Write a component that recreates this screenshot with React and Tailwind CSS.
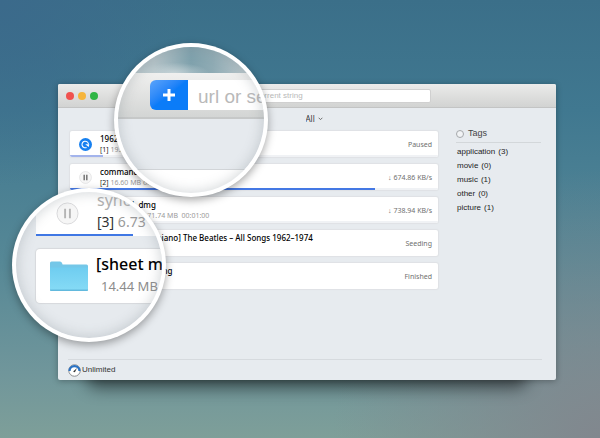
import { useState } from 'react';

const downloads = [
  { id: 1, title: '1962-1966', index: '[1]', detail: '19.20 MB', status: 'Paused', percent: 9, bar: 'bg-[#a3b4ec]', icon: 'resume' },
  { id: 2, title: 'command.dmg', index: '[2]', detail: '16.60 MB of', status: '↓ 674.86 KB/s', percent: 83, bar: 'bg-[#4478e4]', icon: 'pause' },
  { id: 3, title: 'sync tool. dmg', index: '[3]', detail: '6.73 MB of 71.74 MB  00:01:00', status: '↓ 738.94 KB/s', percent: 10, bar: 'bg-[#4478e4]', icon: 'pause' },
  { id: 4, title: '[sheet music – piano] The Beatles – All Songs 1962–1974', status: 'Seeding', icon: 'folder' },
  { id: 5, title: '[sheet music] Song', status: 'Finished', icon: 'folder' },
];

const tags = [
  { name: 'application', count: 3 },
  { name: 'movie', count: 0 },
  { name: 'music', count: 1 },
  { name: 'other', count: 0 },
  { name: 'picture', count: 1 },
];

function PauseIcon({ className }) {
  return (
    <svg viewBox="0 0 24 24" className={className} aria-hidden="true">
      <circle cx="12" cy="12" r="11" fill="#f6f6f6" stroke="#d8d8da" />
      <path d="M9.5 7v10M14.5 7v10" stroke="currentColor" strokeWidth="2" />
    </svg>
  );
}

function ResumeIcon({ className }) {
  return (
    <svg viewBox="0 0 24 24" className={className} aria-hidden="true">
      <circle cx="12" cy="12" r="12" fill="#1680f0" />
      <path d="M14 17.500a6 6 0 1 1 3.500-6" fill="none" stroke="#fff" strokeWidth="2" />
      <path d="M11.500 11.500h7.500l-1 5z" fill="#fff" />
    </svg>
  );
}

function FolderIcon({ className }) {
  return (
    <svg viewBox="0 0 38 31" className={className} aria-hidden="true">
      <defs>
        <linearGradient id="folder" x1="0" y1="0" x2="0" y2="1">
          <stop offset="0" stopColor="#6fcdf0" />
          <stop offset="1" stopColor="#86dbf6" />
        </linearGradient>
      </defs>
      <path d="M0 2.5Q0 1 1.500 1H10q1.500 0 2 1.500l.6 1.500H36.500Q38 4 38 5.500V29q0 1.500-1.500 1.500h-35Q0 30.500 0 29z" fill="#74c7e8" />
      <path d="M0 7h38v22q0 1.500-1.500 1.500h-35Q0 30.500 0 29z" fill="url(#folder)" />
      <path d="M0 29h38q0 1.500-1.500 1.500h-35Q0 30.500 0 29z" fill="#62b9dd" />
    </svg>
  );
}

function GaugeIcon({ className }) {
  return (
    <svg viewBox="0 0 26 26" className={className} aria-hidden="true">
      <circle cx="13" cy="13" r="11.500" fill="#fff" stroke="#8b8d90" strokeWidth="2" />
      <path d="M3 14A10 10 0 0 1 23 14" fill="none" stroke="#2a72c4" strokeWidth="4.500" />
      <path d="M11 14.500L18 8L14 16z" fill="#333" />
      <circle cx="12.500" cy="15" r="1.500" fill="#333" />
    </svg>
  );
}

function DownloadRow({ item }) {
  return (
    <li className="relative flex h-[26px] items-center overflow-hidden rounded-xs bg-white pl-2 pr-[6px] shadow-[0_0_1px_1px_#dfe2e5]">
      <button type="button" aria-label={item.icon} className="flex w-[22px] shrink-0 pl-px text-[#444]">
        {item.icon === 'resume' && <ResumeIcon className="size-[13px]" />}
        {item.icon === 'pause' && <PauseIcon className="size-[13px]" />}
        {item.icon === 'folder' && <FolderIcon className="h-3 w-4" />}
      </button>
      <div className="flex min-w-0 flex-1 flex-col self-start">
        <span className="truncate text-[8px] leading-[15px] font-medium text-black">{item.title}</span>
        {item.detail && (
          <span className="whitespace-pre text-[7px] leading-[8px] text-[#9a9a9a]">
            <span className="text-[#222]">{item.index} </span>
            {item.detail}
          </span>
        )}
      </div>
      <span className="shrink-0 pt-[2px] text-[7px] text-[#6f6f6f]">{item.status}</span>
      {item.percent && (
        <div className="absolute bottom-0 left-0 h-[2px] w-full bg-[#f0f2f5]">
          <div className={`h-full ${item.bar}`} style={{ width: `${item.percent}%` }}></div>
        </div>
      )}
    </li>
  );
}

function Lens({ className, children }) {
  return (
    <div className={`absolute size-[154px] rounded-full bg-white p-1 shadow-[0_3px_8px_rgba(0,0,0,0.35)] ${className}`}>
      <div className="relative size-full overflow-hidden rounded-full bg-[#e6eaee]">
        {children}
        <div className="pointer-events-none absolute inset-0 rounded-full shadow-[inset_0_0_12px_2px_rgba(130,140,145,0.3)]"></div>
      </div>
    </div>
  );
}

export default function App() {
  const [filter, setFilter] = useState('All');

  return (
    <div className="relative flex min-h-screen flex-col overflow-hidden bg-[radial-gradient(circle_at_100%_100%,#81878e_0%,transparent_36%),radial-gradient(circle_at_0%_0%,#3b6a8b_0%,transparent_25%),linear-gradient(to_bottom,#3b6f89_0%,#407890_25%,#568896_60%,#70969b_85%,#7e9f99_100%)] pt-[84px] pr-[44px] pb-[58px] pl-[58px] font-['Noto_Sans',sans-serif]">
      <div className="relative flex flex-1 flex-col">
        <div className="absolute inset-x-7 -bottom-2 h-6 rounded-full bg-black/50 blur-[8px]"></div>
        <div className="relative flex flex-1 flex-col rounded-xs bg-[#e7ebef] shadow-[0_1px_6px_rgba(0,0,0,0.3)]">
          <header className="flex h-6 items-center rounded-t-xs border-b border-[#c3c4c4] bg-linear-to-b from-[#ebebea] to-[#d2d3d2] pl-2">
            <div className="flex gap-1">
              <button type="button" aria-label="Close" className="size-2 rounded-full bg-[#f0524f]"></button>
              <button type="button" aria-label="Minimize" className="size-2 rounded-full bg-[#f6b53c]"></button>
              <button type="button" aria-label="Zoom" className="size-2 rounded-full bg-[#2fb544]"></button>
            </div>
            <input
              type="text"
              aria-label="Add download"
              placeholder="url or search torrent string"
              className="mr-[125px] ml-24 h-[14px] min-w-0 flex-1 rounded-xs border border-[#d0d0d0] bg-white pl-4 font-['Liberation_Sans',sans-serif] text-[8px] outline-none placeholder:text-[#b9b9b9]"
            />
          </header>

          <div className="flex h-[23px] items-center justify-center pb-[2px] pl-[14px]">
            <label className="relative flex items-center">
              <select
                aria-label="Filter"
                value={filter}
                onChange={(e) => setFilter(e.target.value)}
                className="w-[17px] appearance-none bg-transparent text-[8px] text-[#333] outline-none"
              >
                <option>All</option>
                <option>Done</option>
              </select>
              <svg viewBox="0 0 8 6" className="pointer-events-none absolute right-0 h-[4px] w-[5px]" aria-hidden="true">
                <path d="M1 1l3 3 3-3" fill="none" stroke="#666" strokeWidth="1.500" />
              </svg>
            </label>
          </div>

          <div className="flex flex-1">
            <ul className="flex flex-1 flex-col gap-[7px] pl-3">
              {downloads.map((item) => (
                <DownloadRow key={item.id} item={item} />
              ))}
            </ul>
            <aside className="mr-[15px] ml-[18px] w-[85px] font-['Liberation_Sans',sans-serif]">
              <h2 className="flex h-3 items-center gap-1 border-b border-[#d3d7da] pb-[6px] text-[9px] text-[#444]">
                <span className="size-2 rounded-full border border-[#a5a8ab] bg-[#f1f3f5]"></span>
                Tags
              </h2>
              <ul className="pt-[2px] pl-px text-[8px] leading-[14px] text-[#1d1d1d]">
                {tags.map((t) => (
                  <li key={t.name} className="flex gap-[3px]">
                    <span>{t.name}</span>
                    <span>({t.count})</span>
                  </li>
                ))}
              </ul>
            </aside>
          </div>

          <footer className="mr-[14px] ml-[10px] flex h-[21px] items-center border-t border-[#d6dade] font-['Liberation_Sans',sans-serif] text-[8px] text-[#333]">
            <GaugeIcon className="mr-px size-[13px]" />
            Unlimited
          </footer>
        </div>
      </div>

      {/* search bar lens */}
      <Lens className="top-[43px] left-[114px]">
        <div className="h-[26px] bg-[radial-gradient(ellipse_at_38%_100%,#c4d2d6_0%,transparent_28%),linear-gradient(to_right,#b5c4c9_25%,#7fa1ac_50%,#8fabb4_65%,#b5c4c9_85%)]"></div>
        <div className="flex h-[46px] items-center border-b-2 border-[#c6c8c8] bg-linear-to-b from-[#f0f0ef] to-[#d3d5d4] pl-8">
          <button type="button" aria-label="Add" className="flex h-[30px] w-[38px] shrink-0 items-center justify-center rounded-l-md bg-linear-to-br from-[#5aa4fa] to-[#0b7cf8] to-50%">
            <svg viewBox="0 0 12 12" className="size-3" aria-hidden="true">
              <path d="M6 0v12M0 6h12" stroke="#fff" strokeWidth="3" />
            </svg>
          </button>
          <input
            type="text"
            aria-label="Url or search"
            placeholder="url or sea"
            className="h-[30px] w-[160px] shrink-0 bg-white pt-1 pl-[10px] font-['Liberation_Sans',sans-serif] text-[19px] outline-none placeholder:text-[#b9b9b9]"
          />
        </div>
        <div className="h-[51px] border-b border-[#d2d5d8]"></div>
        <div className="h-6 bg-white"></div>
      </Lens>

      {/* download list lens */}
      <Lens className="top-[188px] left-[12px]">
        <div className="ml-5 h-11 bg-white">
          <div className="flex h-[42px] items-center">
            <PauseIcon className="mr-[18px] ml-5 size-[23px] shrink-0 text-[#b5b5b5]" />
            <div className="flex flex-col pb-[5px] text-[14px] leading-[22px] whitespace-nowrap">
              <span className="text-[16px] text-[#b0b0b0]">sync</span>
              <span className="text-[#9a9a9a]"><span className="text-[#333]">[3]</span> 6.73</span>
            </div>
          </div>
          <div className="h-[2px] w-[97px] bg-[#3f77e4]"></div>
        </div>
        <div className="mt-[13px] ml-5 flex h-[54px] items-center rounded-l-sm bg-white shadow-[0_0_1px_1px_#d6d9dc]">
          <FolderIcon className="mr-2 ml-[14px] h-[32px] w-[38px] shrink-0" />
          <div className="flex flex-col pb-[2px] whitespace-nowrap">
            <span className="text-[16px] leading-[22px] font-medium text-black">[sheet m</span>
            <span className="pl-[5px] text-[13px] leading-[22px] text-[#8c8c8c]">14.44 MB</span>
          </div>
        </div>
      </Lens>
    </div>
  );
}
